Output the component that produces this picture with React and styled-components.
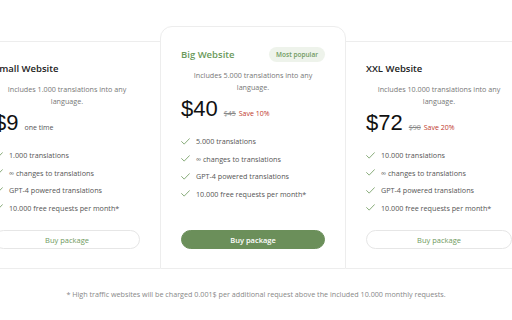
import React from "react";
import styled, { createGlobalStyle } from "styled-components";

const plans = [
  {
    name: "Small Website",
    amount: "1.000",
    price: "$9",
    note: "one time",
    features: ["1.000 translations"],
  },
  {
    name: "Big Website",
    amount: "5.000",
    price: "$40",
    old: "$45",
    save: "Save 10%",
    popular: true,
    features: ["5.000 translations"],
  },
  {
    name: "XXL Website",
    amount: "10.000",
    price: "$72",
    old: "$90",
    save: "Save 20%",
    features: ["10.000 translations"],
  },
];

const extras = [
  "∞ changes to translations",
  "GPT-4 powered translations",
  "10.000 free requests per month*",
];

function Check() {
  return (
    <svg width="9" height="7" viewBox="0 0 9 7" fill="none">
      <path d="M0.6 3.6 L3.2 6.1 L8.4 0.7" stroke="#7aa36b" strokeWidth="0.9" strokeLinecap="round" strokeLinejoin="round" />
    </svg>
  );
}

export default function App() {
  return (
    <>
      <GlobalStyle />
      <Page>
        <Row>
          {plans.map((plan) => (
            <Card key={plan.name} $popular={plan.popular}>
              <TitleRow>
                <Title $popular={plan.popular}>{plan.name}</Title>
                {plan.popular && <Badge>Most popular</Badge>}
              </TitleRow>
              <Description>
                Includes {plan.amount} translations into any language.
              </Description>
              <PriceRow>
                <Price>{plan.price}</Price>
                {plan.note && <Note>{plan.note}</Note>}
                {plan.old && <Old>{plan.old}</Old>}
                {plan.save && <Save>{plan.save}</Save>}
              </PriceRow>
              <Features>
                {[...plan.features, ...extras].map((f) => (
                  <Feature key={f}>
                    <Check />
                    <span>{f}</span>
                  </Feature>
                ))}
              </Features>
              <BuyButton $popular={plan.popular}>Buy package</BuyButton>
            </Card>
          ))}
        </Row>
        <Footnote>
          * High traffic websites will be charged 0.001$ per additional request
          above the included 10.000 monthly requests.
        </Footnote>
      </Page>
    </>
  );
}

const GlobalStyle = createGlobalStyle`
  body {
    margin: 0;
    background: #fff;
    overflow: hidden;
    font-family: "Open Sans", "Noto Sans", sans-serif;
  }
`;

const Page = styled.div`
  width: 512px;
  height: 320px;
  padding-top: 26px;
  box-sizing: border-box;
`;

const Row = styled.div`
  display: flex;
  justify-content: center;
  align-items: stretch;
  height: 243px;
  padding-right: 6px;
`;

const Card = styled.div`
  flex: 0 0 186px;
  box-sizing: border-box;
  display: flex;
  flex-direction: column;
  padding: ${(p) => (p.$popular ? "19px" : "18px")} 20px 19px;
  margin-top: ${(p) => (p.$popular ? "0" : "15px")};
  border-top: 1px solid #ededed;
  border-bottom: 1px solid #ededed;
  border-left: ${(p) => (p.$popular ? "1px solid #ededed" : "none")};
  border-right: ${(p) => (p.$popular ? "1px solid #ededed" : "none")};
  border-radius: ${(p) => (p.$popular ? "12px 12px 0 0" : "0")};
`;

const TitleRow = styled.div`
  display: flex;
  align-items: center;
  justify-content: space-between;
  height: 16px;
`;

const Title = styled.div`
  font-size: 9.5px;
  font-weight: 600;
  color: ${(p) => (p.$popular ? "#6a9a5a" : "#222")};
`;

const Badge = styled.div`
  background: #eef3eb;
  color: #6f9a60;
  font-size: 6.5px;
  font-weight: 600;
  padding: 0 7px;
  height: 15px;
  line-height: 15px;
  border-radius: 8px;
`;

const Description = styled.div`
  margin-top: 7px;
  text-align: center;
  font-size: 7.2px;
  line-height: 12px;
  color: #777;
  padding: 0 4px;
`;

const PriceRow = styled.div`
  display: flex;
  align-items: baseline;
  gap: 3px;
  margin-top: 3px;
  height: 24px;
`;

const Price = styled.span`
  font-family: "Liberation Sans", Arial, sans-serif;
  font-size: 22px;
  color: #111;
  margin-right: 3px;
`;

const Note = styled.span`
  font-size: 7px;
  color: #555;
`;

const Old = styled.span`
  font-size: 7px;
  color: #888;
  text-decoration: line-through;
`;

const Save = styled.span`
  font-size: 7px;
  color: #c0392b;
`;

const Features = styled.div`
  margin-top: 15px;
  display: flex;
  flex-direction: column;
  gap: 5.5px;
`;

const Feature = styled.div`
  display: flex;
  align-items: center;
  gap: 6px;
  height: 12px;
  font-size: 7.2px;
  color: #555;
`;

const BuyButton = styled.button`
  margin-top: auto;
  height: 19px;
  border-radius: 10px;
  font-family: inherit;
  font-size: 7.5px;
  cursor: pointer;
  border: 1px solid ${(p) => (p.$popular ? "#6b8f5a" : "#e6e6e6")};
  background: ${(p) => (p.$popular ? "#6b8f5a" : "#fff")};
  color: ${(p) => (p.$popular ? "#fff" : "#6f9a60")};
  font-weight: ${(p) => (p.$popular ? 600 : 400)};
`;

const Footnote = styled.div`
  margin-top: 20px;
  text-align: center;
  font-size: 7.2px;
  color: #888;
`;
